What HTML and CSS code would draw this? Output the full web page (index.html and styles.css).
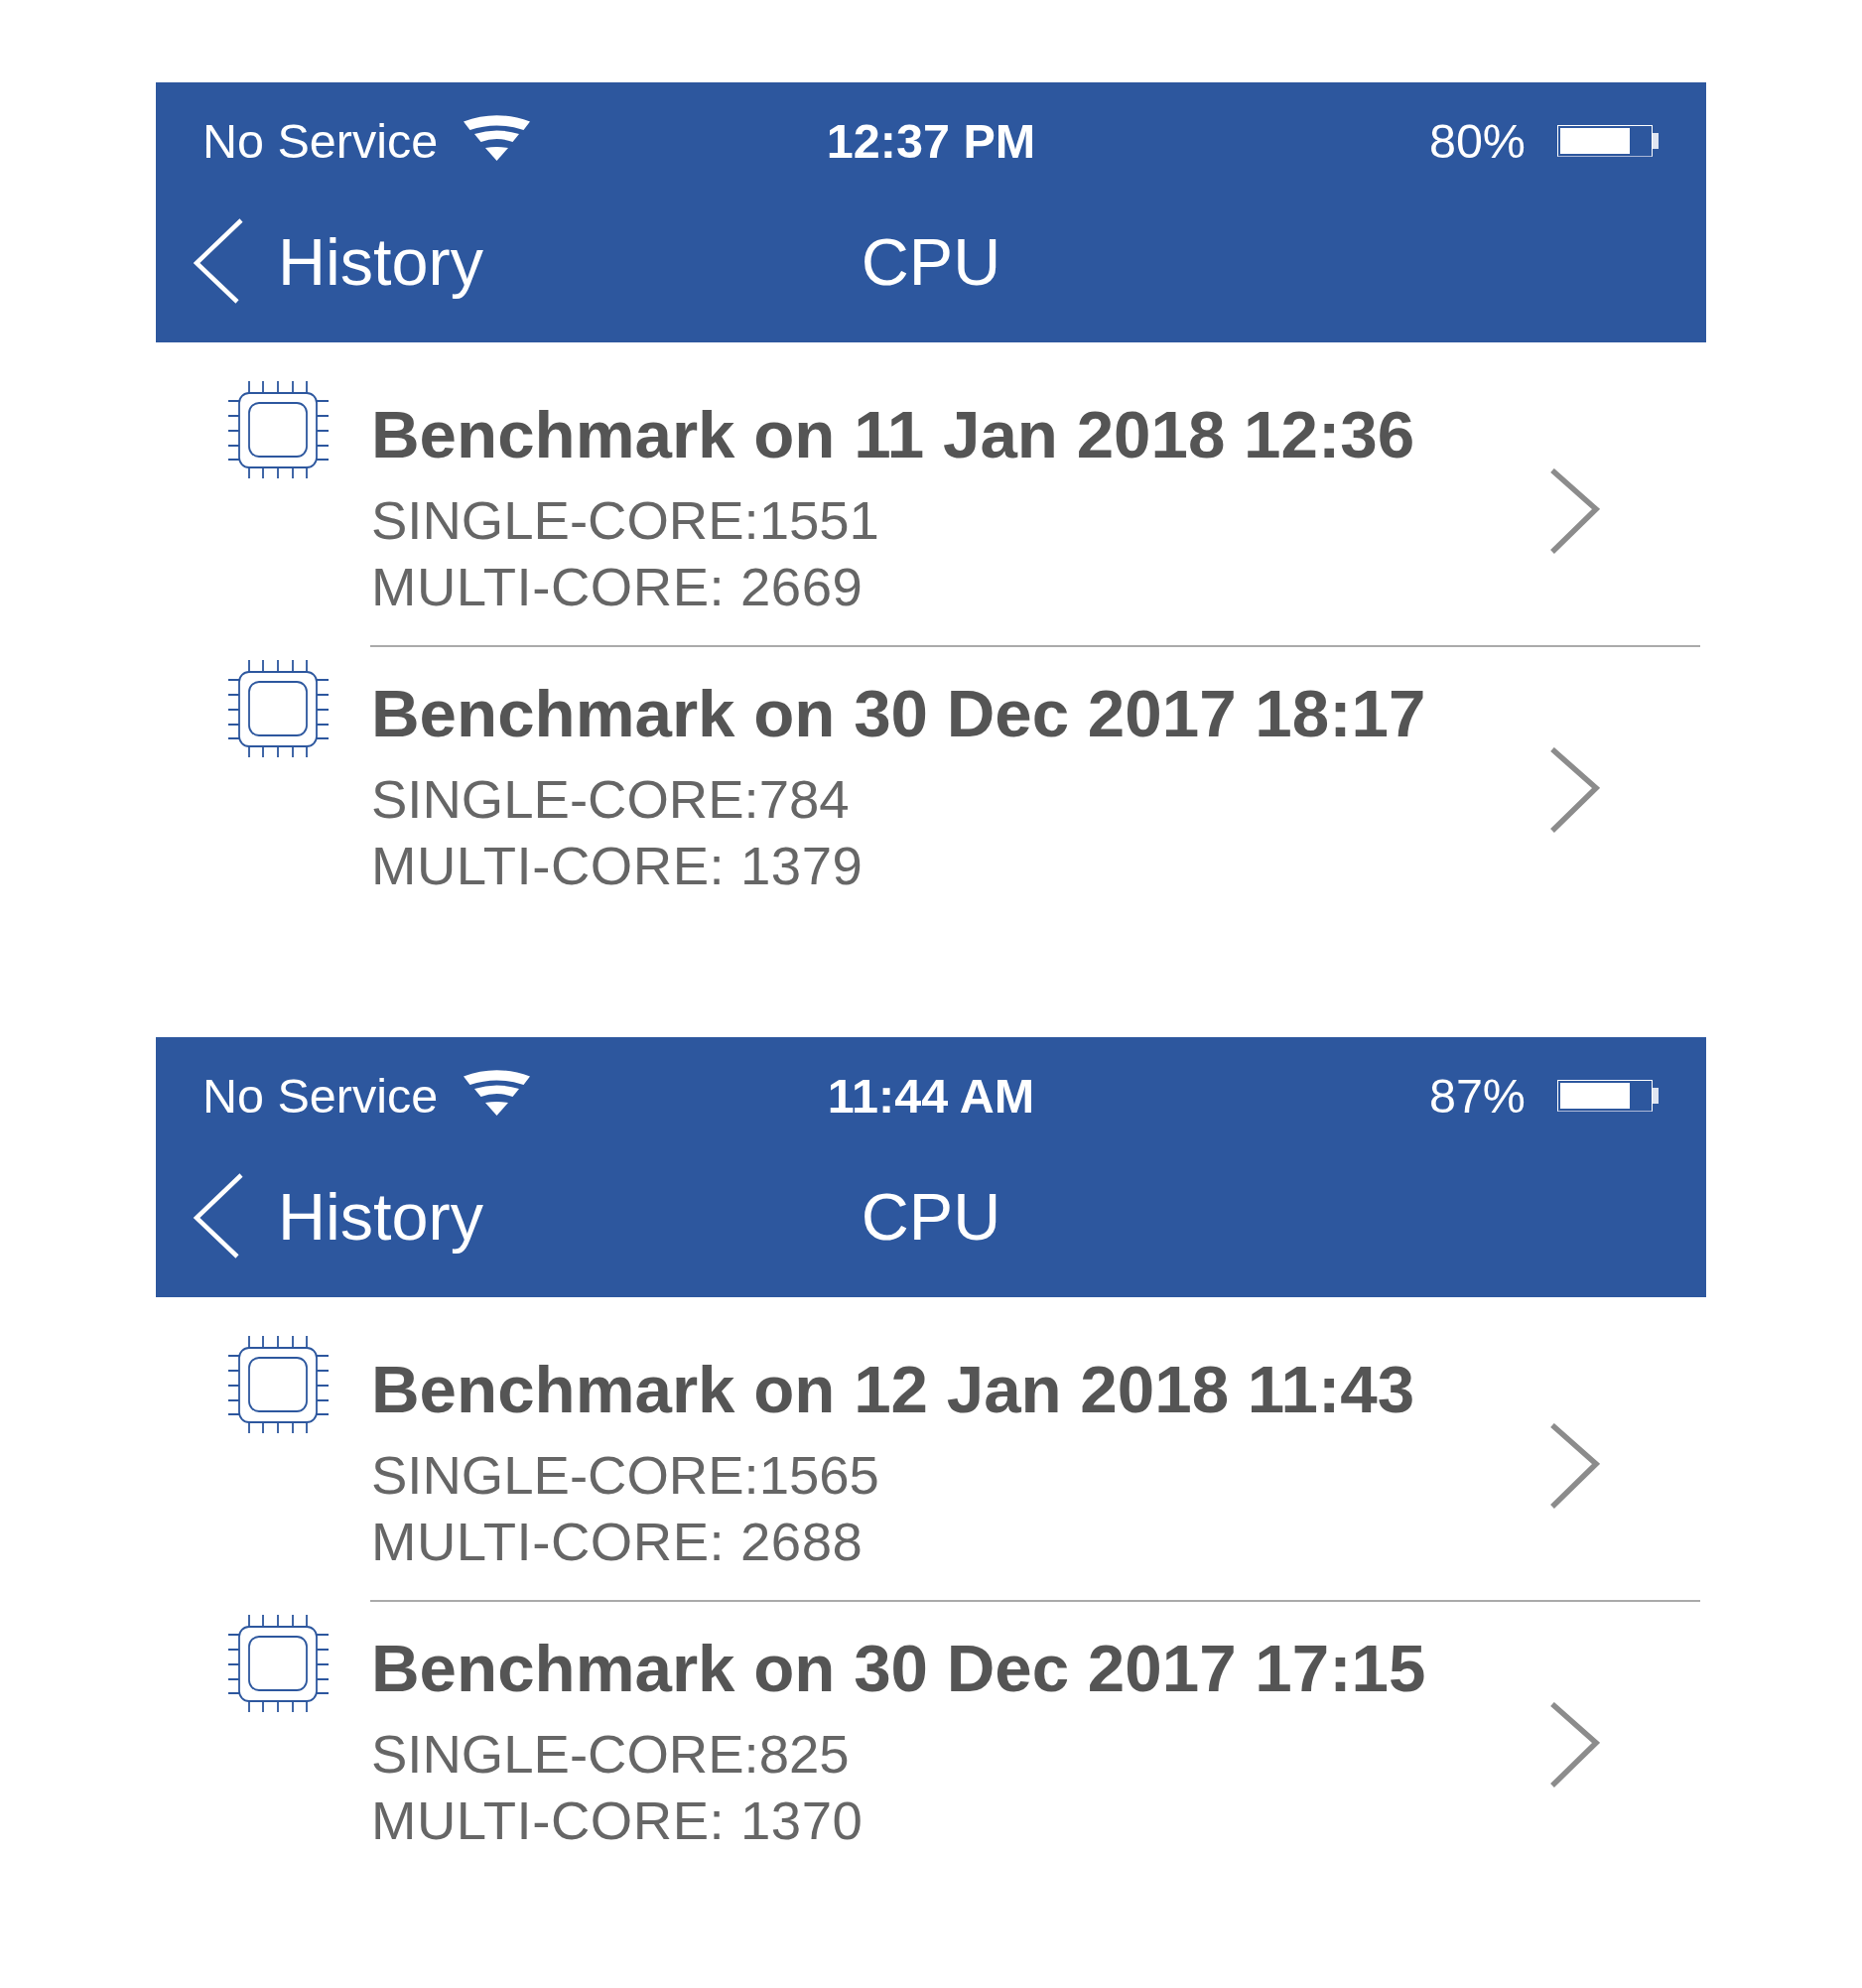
FILE: index.html
```html
<!DOCTYPE html>
<html lang="en">
<head>
<meta charset="utf-8">
<title>CPU History</title>
<link rel="stylesheet" href="styles.css">
</head>
<body>
<svg class="defs" aria-hidden="true">
  <symbol id="wifi" viewBox="0 0 67 46">
    <path d="M0 6.5Q33.5-6 67 6.5L60.5 15Q33.5 6 6.5 15Z"/>
    <path d="M11 19Q33.5 12 56 19L49.5 27Q33.5 21 17.5 27Z"/>
    <path d="M22 33Q33.5 31 45 33L33.5 46Z"/>
  </symbol>
  <symbol id="chip" viewBox="0 0 102 100">
    <rect x="11" y="13" width="78" height="75" rx="10"/>
    <rect x="21" y="23" width="58" height="54" rx="10"/>
    <path d="M0 21H11M0 36H11M0 51H11M0 66H11M0 80H11M89 21H101M89 36H101M89 51H101M89 66H101M89 80H101M21 1V13M35 1V13M50 1V13M65 1V13M79 1V13M21 88V99M35 88V99M50 88V99M65 88V99M79 88V99"/>
  </symbol>
  <symbol id="chev-r" viewBox="0 0 50 86">
    <path d="M2 2L46 41L2 84"/>
  </symbol>
  <symbol id="chev-l" viewBox="0 0 52 86">
    <path d="M49 2L4 45L45 84"/>
  </symbol>
</svg>

<section class="phone">
  <header class="bar">
    <div class="status">
      <div class="status-left"><span>No Service</span><svg class="wifi"><use href="#wifi"/></svg></div>
      <strong class="time">12:37 PM</strong>
      <div class="status-right"><span>80%</span>
        <div class="battery"><div class="battery-fill"></div></div><div class="battery-nub"></div>
      </div>
    </div>
    <nav class="nav">
      <div class="back"><svg class="chev-l"><use href="#chev-l"/></svg><span>History</span></div>
      <div class="nav-title">CPU</div>
      <div></div>
    </nav>
  </header>
  <div class="list">
    <div class="row">
      <svg class="chip"><use href="#chip"/></svg>
      <div class="row-body">
        <div class="row-text">
          <h2 class="row-title">Benchmark on 11 Jan 2018 12:36</h2>
          <p class="row-sub">SINGLE-CORE:1551</p>
          <p class="row-sub row-sub-multi">MULTI-CORE: 2669</p>
        </div>
        <svg class="chev-r"><use href="#chev-r"/></svg>
      </div>
    </div>
    <div class="row">
      <svg class="chip"><use href="#chip"/></svg>
      <div class="row-body">
        <div class="row-text">
          <h2 class="row-title">Benchmark on 30 Dec 2017 18:17</h2>
          <p class="row-sub">SINGLE-CORE:784</p>
          <p class="row-sub row-sub-multi">MULTI-CORE: 1379</p>
        </div>
        <svg class="chev-r"><use href="#chev-r"/></svg>
      </div>
    </div>
  </div>
</section>

<section class="phone">
  <header class="bar">
    <div class="status">
      <div class="status-left"><span>No Service</span><svg class="wifi"><use href="#wifi"/></svg></div>
      <strong class="time">11:44 AM</strong>
      <div class="status-right"><span>87%</span>
        <div class="battery"><div class="battery-fill"></div></div><div class="battery-nub"></div>
      </div>
    </div>
    <nav class="nav">
      <div class="back"><svg class="chev-l"><use href="#chev-l"/></svg><span>History</span></div>
      <div class="nav-title">CPU</div>
      <div></div>
    </nav>
  </header>
  <div class="list">
    <div class="row">
      <svg class="chip"><use href="#chip"/></svg>
      <div class="row-body">
        <div class="row-text">
          <h2 class="row-title">Benchmark on 12 Jan 2018 11:43</h2>
          <p class="row-sub">SINGLE-CORE:1565</p>
          <p class="row-sub row-sub-multi">MULTI-CORE: 2688</p>
        </div>
        <svg class="chev-r"><use href="#chev-r"/></svg>
      </div>
    </div>
    <div class="row">
      <svg class="chip"><use href="#chip"/></svg>
      <div class="row-body">
        <div class="row-text">
          <h2 class="row-title">Benchmark on 30 Dec 2017 17:15</h2>
          <p class="row-sub">SINGLE-CORE:825</p>
          <p class="row-sub row-sub-multi">MULTI-CORE: 1370</p>
        </div>
        <svg class="chev-r"><use href="#chev-r"/></svg>
      </div>
    </div>
  </div>
</section>
</body>
</html>
```
FILE: styles.css
```css
html, body {
  margin: 0;
  background: #fff;
}
body {
  padding: 83px 157px 0;
  font-family: "Liberation Sans", Arial, sans-serif;
  min-height: 1920px;
}
.defs {
  position: absolute;
  width: 0;
  height: 0;
}
.phone + .phone {
  margin-top: 112px;
}
.bar {
  background: #2d579e;
  color: #fff;
  height: 262px;
  padding-top: 31px;
  box-sizing: border-box;
}
.status {
  display: grid;
  grid-template-columns: 1fr auto 1fr;
  align-items: center;
  height: 56px;
  padding: 0 47px;
  font-size: 48.5px;
  line-height: 56px;
}
.status-left {
  display: flex;
  align-items: center;
}
.wifi {
  width: 67px;
  height: 46px;
  margin-left: 26px;
  margin-top: -6px;
  fill: #fff;
}
.time {
  font-weight: 700;
}
.status-right {
  display: flex;
  align-items: center;
  justify-content: flex-end;
}
.battery {
  width: 96px;
  height: 32px;
  margin-left: 32px;
  box-sizing: border-box;
  border: 1.5px solid #fff;
  border-bottom-color: #aab6d6;
  padding: 2px 22px 2px 2px;
}
.battery-fill {
  height: 100%;
  background: #fff;
}
.battery-nub {
  width: 6px;
  height: 16px;
  background: #dfe5f1;
  margin-right: 1px;
}
.nav {
  display: grid;
  grid-template-columns: 1fr auto 1fr;
  grid-template-rows: 62px;
  align-items: center;
  height: 62px;
  margin-top: 63px;
  font-size: 66.5px;
  line-height: 62px;
}
.back {
  display: flex;
  align-items: center;
  height: 62px;
  padding-left: 37px;
}
.chev-l {
  flex: none;
  width: 52px;
  height: 86px;
  margin-top: -2px;
  margin-right: 34px;
  fill: none;
  stroke: #fff;
  stroke-width: 4.5;
}
.list {
  padding-top: 26px;
}
.row {
  display: flex;
  align-items: flex-start;
  height: 281px;
  padding-left: 73px;
}
.chip {
  flex: none;
  width: 102px;
  height: 100px;
  margin-top: 12px;
  margin-right: 41px;
  fill: none;
  stroke: #2d579e;
  stroke-width: 1.8;
}
.row-body {
  flex: 1;
  display: flex;
  height: 281px;
  box-sizing: border-box;
  margin-right: 6px;
  padding-right: 101px;
  border-bottom: 2px solid #aaaaaa;
}
.row:last-child .row-body {
  border-bottom: 0;
}
.row-text {
  flex: 1;
  padding: 27px 0 0 1px;
  color: #5a5a5a;
}
.row-title {
  margin: 0 0 13px;
  font-size: 67.3px;
  line-height: 80px;
  font-weight: 700;
  color: #555;
}
.row-sub {
  margin: 0;
  font-size: 54.5px;
  line-height: 67px;
  color: #666;
}
.row-sub-multi {
  letter-spacing: 0.55px;
}
.chev-r {
  flex: none;
  width: 50px;
  height: 86px;
  margin-top: 101px;
  fill: none;
  stroke: #8c8c8c;
  stroke-width: 5.5;
}
```
